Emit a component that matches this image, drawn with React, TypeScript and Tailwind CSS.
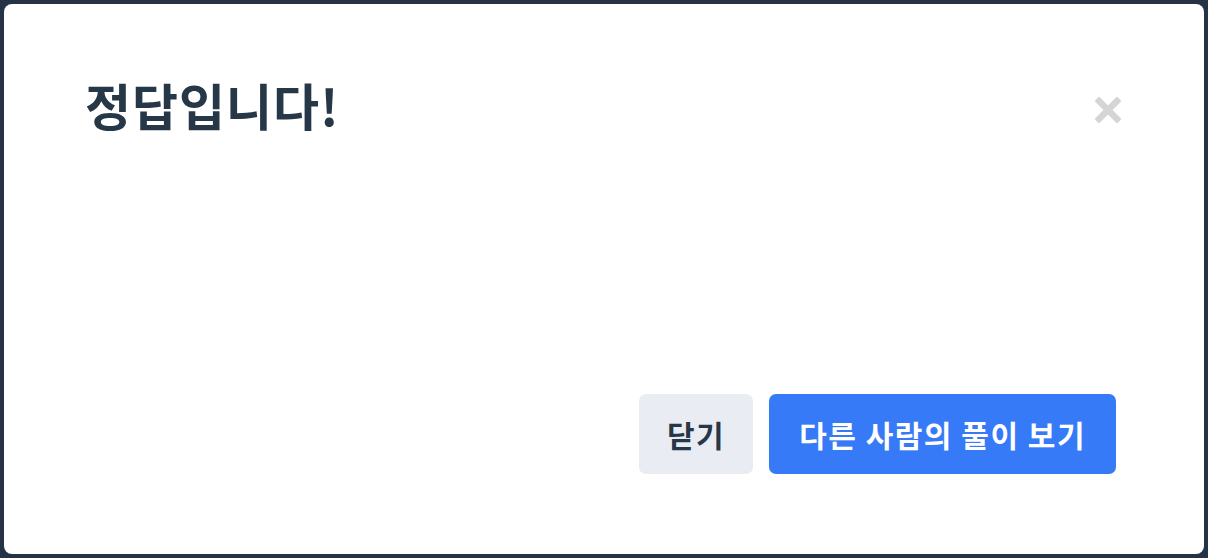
const App: React.FC = () => {
  return (
    <div
      className="h-[558px] w-[1208px] bg-[#263246] p-1"
      style={{ fontFamily: '"Noto Sans CJK KR", "Noto Sans", sans-serif' }}
    >
      <div className="flex h-full flex-col rounded-[8px] bg-white pb-[80px] pl-[81px] pr-[88px] pt-[70px]">
        <div className="flex items-start justify-between">
          <h1 className="text-[50px] font-bold leading-[1.2] tracking-[1px] text-[#263747]">정답입니다!</h1>
          <button className="mr-[-5px] mt-[23px] flex h-[26px] w-[26px] items-center justify-center" aria-label="close">
            <svg width="26" height="26" viewBox="0 0 26 26">
              <path d="M4 4 L22 22 M22 4 L4 22" stroke="#d5d5d5" strokeWidth="6.5" strokeLinecap="square" />
            </svg>
          </button>
        </div>
        <div className="mt-auto flex justify-end gap-4">
          <button className="h-[80px] rounded-[7px] bg-[#e9ecf3] px-[28px] text-[30px] font-bold tracking-[1.5px] text-[#263747]">
            닫기
          </button>
          <button className="h-[80px] rounded-[7px] bg-[#377af7] px-[30px] text-[30px] font-bold tracking-[1.5px] text-white">
            다른 사람의 풀이 보기
          </button>
        </div>
      </div>
    </div>
  );
};

export default App;
